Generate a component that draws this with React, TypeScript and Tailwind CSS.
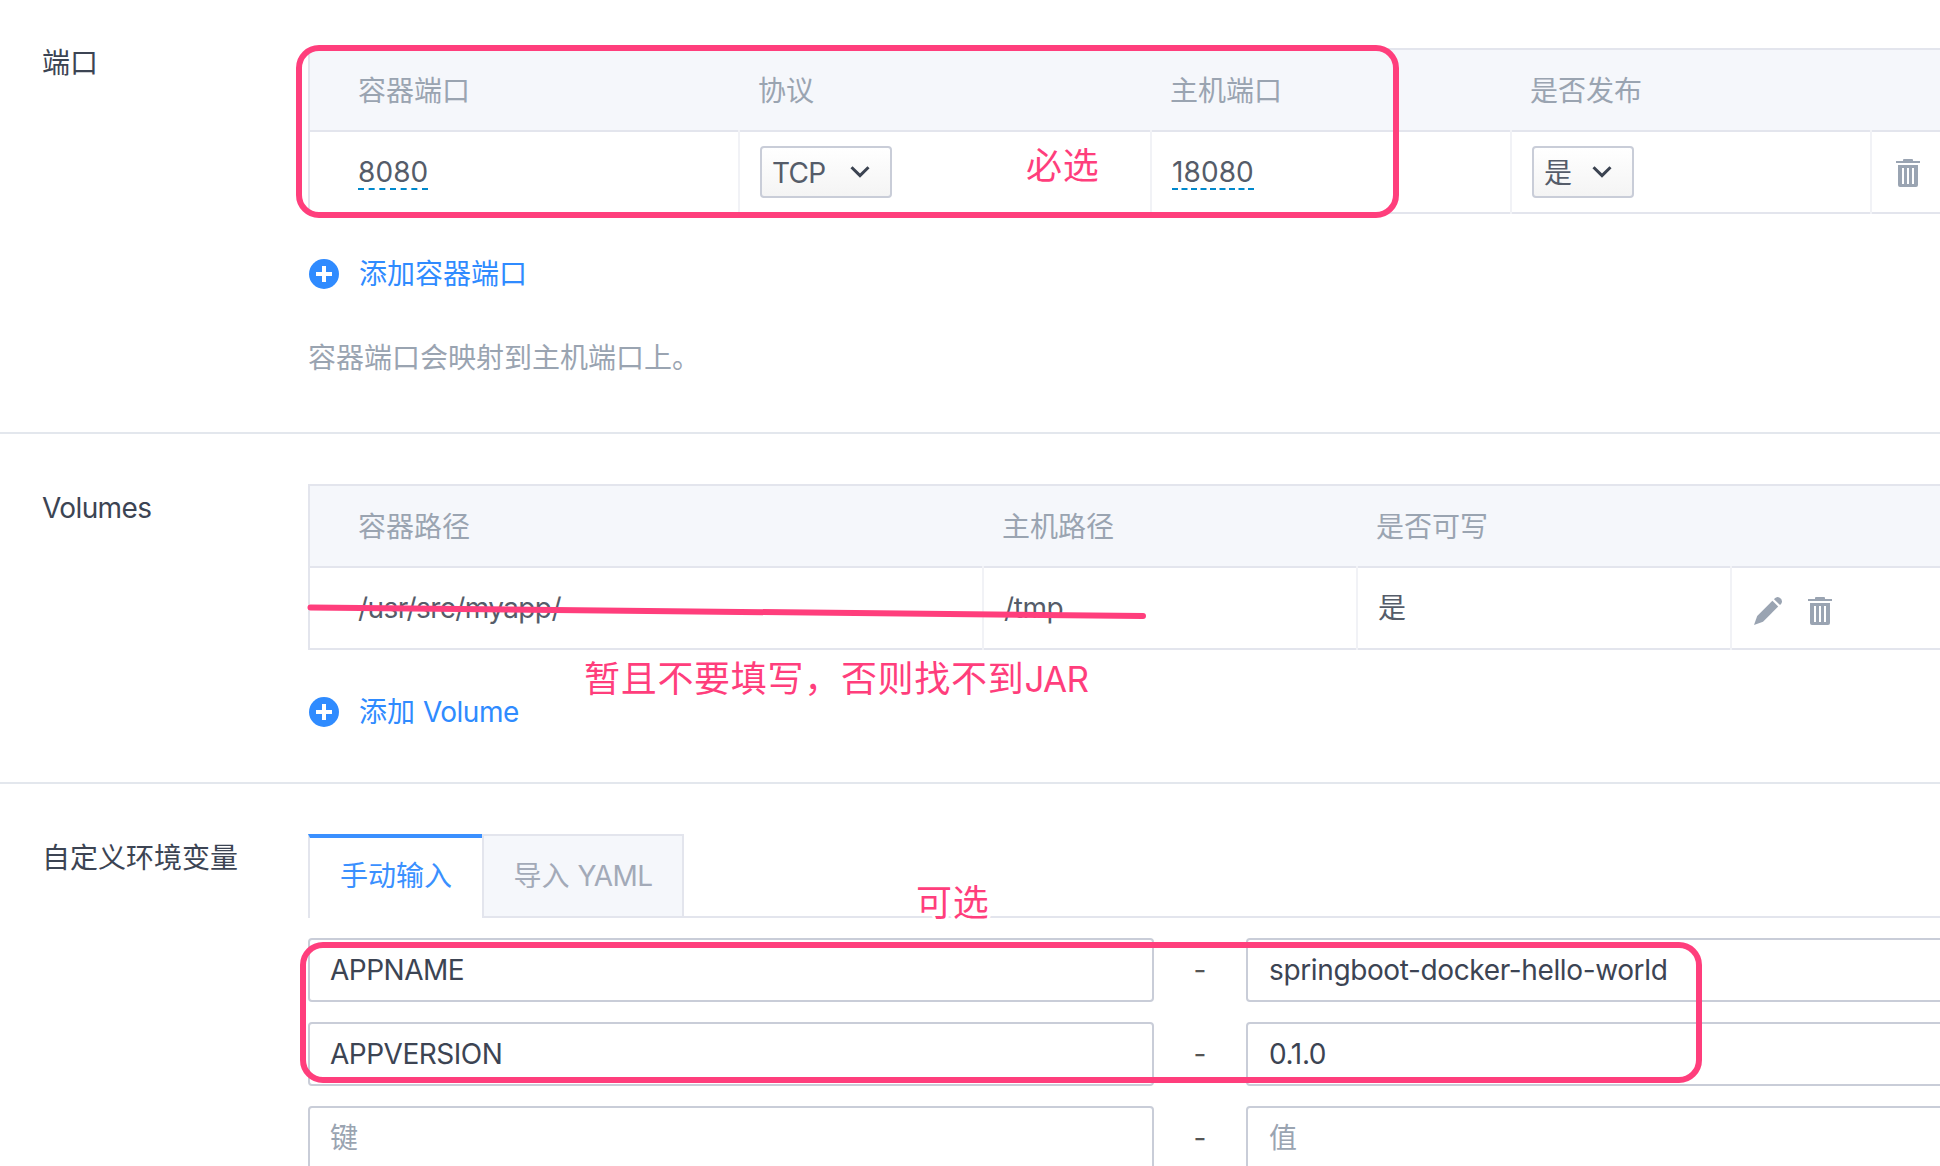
import type { ReactNode } from "react";

function Trash() {
  return (
    <svg className="block h-7 w-6 shrink-0" viewBox="0 0 24 28" fill="#9aa4b2">
      <path d="M0 2h7V1a1 1 0 0 1 1-1h8a1 1 0 0 1 1 1v1h7v2H0z" />
      <path
        fillRule="evenodd"
        d="M2 6h20v20a2 2 0 0 1-2 2H4a2 2 0 0 1-2-2zM6 9v16h2V9zm5 0v16h2V9zm5 0v16h2V9z"
      />
    </svg>
  );
}

function Pencil() {
  return (
    <svg className="block size-7 shrink-0" viewBox="0 0 28 28" fill="#9aa4b2">
      <path d="M18.400 3.800L24.200 9.600 9 24.800 0 28l3.200-9z" />
      <path d="M20.600 1.600A4.200 4.200 0 0 1 28 4.400c0 1-.4 2-1.200 2.800l-.8.8L20 2.200z" />
    </svg>
  );
}

function Section({ label, className, children }: { label: string; className: string; children: ReactNode }) {
  return (
    <section className={`flex items-start border-[#e3e7ed] pl-[42px] ${className}`}>
      <h2 className="mt-0.5 w-[266px] shrink-0 leading-[44px] text-[#3c4453]">{label}</h2>
      <div className="w-[1700px] shrink-0">{children}</div>
    </section>
  );
}

function Table({ cols, heads, cells }: { cols: string; heads: string[]; cells: ReactNode[] }) {
  return (
    <div className="border-l-2 border-[#e3e5ed]">
      <div className={`grid h-[82px] border-t-2 border-[#e3e5ed] bg-[#f5f7fb] ${cols}`}>
        {heads.map((h, i) => (
          <div key={i} className={`flex items-center pt-px text-[#9aa4b1] ${i === 0 ? "pl-12" : "pl-5"}`}>
            {h}
          </div>
        ))}
      </div>
      <div className={`grid h-[84px] text-[#555c69] ${cols}`}>
        {cells.map((c, i) => (
          <div key={i} className="flex">
            {i > 0 && <div className="w-0.5 bg-[#f1f2f6]" />}
            <div className={`flex flex-1 items-center border-y-2 border-[#e3e5ed] ${i === 0 ? "pl-12" : "pl-5"}`}>{c}</div>
          </div>
        ))}
      </div>
    </div>
  );
}

function Editable({ children }: { children: ReactNode }) {
  return (
    <span className="h-9 border-b-2 border-dashed border-[#0088cc] leading-[36px] tracking-[0.1px]">{children}</span>
  );
}

function Select({ value, className }: { value: string; className: string }) {
  return (
    <button
      className={`flex h-[52px] items-center justify-between rounded border-2 border-[#c9cdd8] bg-linear-to-b from-white to-[#f4f4f4] pr-5 pl-2.5 ${className}`}
    >
      <span className="pt-px tracking-[-0.7px]">{value}</span>
      <svg className="h-3 w-5" viewBox="0 0 20 12" fill="none" stroke="#3b4351" strokeWidth="3">
        <path d="M1.5 1.2L10 9.6l8.5-8.4" />
      </svg>
    </button>
  );
}

function AddLink({ children, className }: { children: ReactNode; className: string }) {
  return (
    <a className={`flex h-11 items-center gap-5 pl-px text-[#2f8bff] ${className}`}>
      <svg className="size-[30px]" viewBox="0 0 30 30">
        <circle cx="15" cy="15" r="15" fill="#2f8bff" />
        <path d="M7 15h16M15 7v16" stroke="#fff" strokeWidth="4" />
      </svg>
      <span>{children}</span>
    </a>
  );
}

function EnvRow({ name, value, empty }: { name: string; value: string; empty?: boolean }) {
  const tone = empty ? "text-[#9aa4b1]" : "text-[#3c4453]";
  return (
    <div className={`flex h-16 items-stretch ${tone}`}>
      <div className="flex w-[846px] items-center rounded border-2 border-[#c9cdd8] bg-white pl-5 tracking-[-0.5px]">
        {name}
      </div>
      <div className="flex w-[92px] items-center justify-center text-[#555]">-</div>
      <div className="flex flex-1 items-center rounded border-2 border-[#c9cdd8] bg-white pl-[21px] tracking-[-0.37px]">
        {value}
      </div>
    </div>
  );
}

const note =
  "absolute whitespace-nowrap text-[36px] leading-[44px] tracking-[0.7px] text-[#ff3e7c] [-webkit-text-stroke:6px_white] [paint-order:stroke_fill]";

export default function App() {
  return (
    <div className="relative h-[1166px] w-[1940px] overflow-hidden bg-white font-['Inter','Noto_Sans_CJK_SC',sans-serif] text-[28px] leading-[44px]">
      <Section label="端口" className="h-[434px] border-b-2 pt-12 [&>h2]:-mt-[7px]">
        <Table
          cols="grid-cols-[428px_412px_360px_360px_1fr]"
          heads={["容器端口", "协议", "主机端口", "是否发布", ""]}
          cells={[
            <Editable>8080</Editable>,
            <Select value="TCP" className="w-[132px]" />,
            <Editable>18080</Editable>,
            <Select value="是" className="w-[102px]" />,
            <span className="pt-0.5 pl-1">
              <Trash />
            </span>,
          ]}
        />
        <AddLink className="mt-[38px]">添加容器端口</AddLink>
        <p className="mt-10 text-[#9aa4b1]">容器端口会映射到主机端口上。</p>
      </Section>

      <Section label="Volumes" className="h-[350px] border-b-2 pt-[50px] [&>h2]:tracking-[-0.6px]">
        <Table
          cols="grid-cols-[672px_374px_374px_1fr]"
          heads={["容器路径", "主机路径", "是否可写", ""]}
          cells={[
            <span className="tracking-[-0.6px]">/usr/src/myapp/</span>,
            <span className="tracking-[-0.4px]">/tmp</span>,
            "是",
            <span className="flex gap-[26px] pt-1.5 pl-0.5">
              <Pencil />
              <Trash />
            </span>,
          ]}
        />
        <AddLink className="mt-10">
          添加 <span className="tracking-[-0.5px]">Volume</span>
        </AddLink>
      </Section>

      <Section label="自定义环境变量" className="pt-[50px]">
        <div className="flex h-[84px]">
          <div className="flex w-[174px] items-center justify-center border-t-4 border-l-2 border-t-[#3a90ff] border-l-[#e3e5ed] pb-1 text-[#3a90ff]">
            手动输入
          </div>
          <div className="flex w-[202px] items-center justify-center border-2 border-[#e3e5ed] bg-[#f5f7fb] text-[#a3aab8]">
            <span>
              导入 <span className="tracking-[-0.6px]">YAML</span>
            </span>
          </div>
          <div className="flex-1 border-b-2 border-[#e3e5ed]" />
        </div>
        <div className="mt-5 flex flex-col gap-5">
          <EnvRow name="APPNAME" value="springboot-docker-hello-world" />
          <EnvRow name="APPVERSION" value="0.1.0" />
          <EnvRow name="键" value="值" empty />
        </div>
      </Section>

      {/* Hand-drawn annotations layered over the form */}
      <div className="absolute top-[45px] left-[296px] h-[173px] w-[1103px] rounded-[23px] border-6 border-[#ff3e7c]" />
      <div className="absolute top-[942px] left-[300px] h-[141px] w-[1402px] rounded-[23px] border-6 border-[#ff3e7c]" />
      <svg className="absolute top-[600px] left-[300px] h-6 w-[860px]" viewBox="0 0 860 24">
        <path d="M10.500 7.500L843 16" stroke="#ff3e7c" strokeWidth="6" strokeLinecap="round" />
      </svg>
      <span className={`${note} top-[144px] left-[1026px]`}>必选</span>
      <span className={`${note} top-[657px] left-[584px]`}>
        暂且不要填写，否则找不到<span className="text-[35px] tracking-[-0.7px]">JAR</span>
      </span>
      <span className={`${note} top-[881px] left-[916px]`}>可选</span>
    </div>
  );
}
